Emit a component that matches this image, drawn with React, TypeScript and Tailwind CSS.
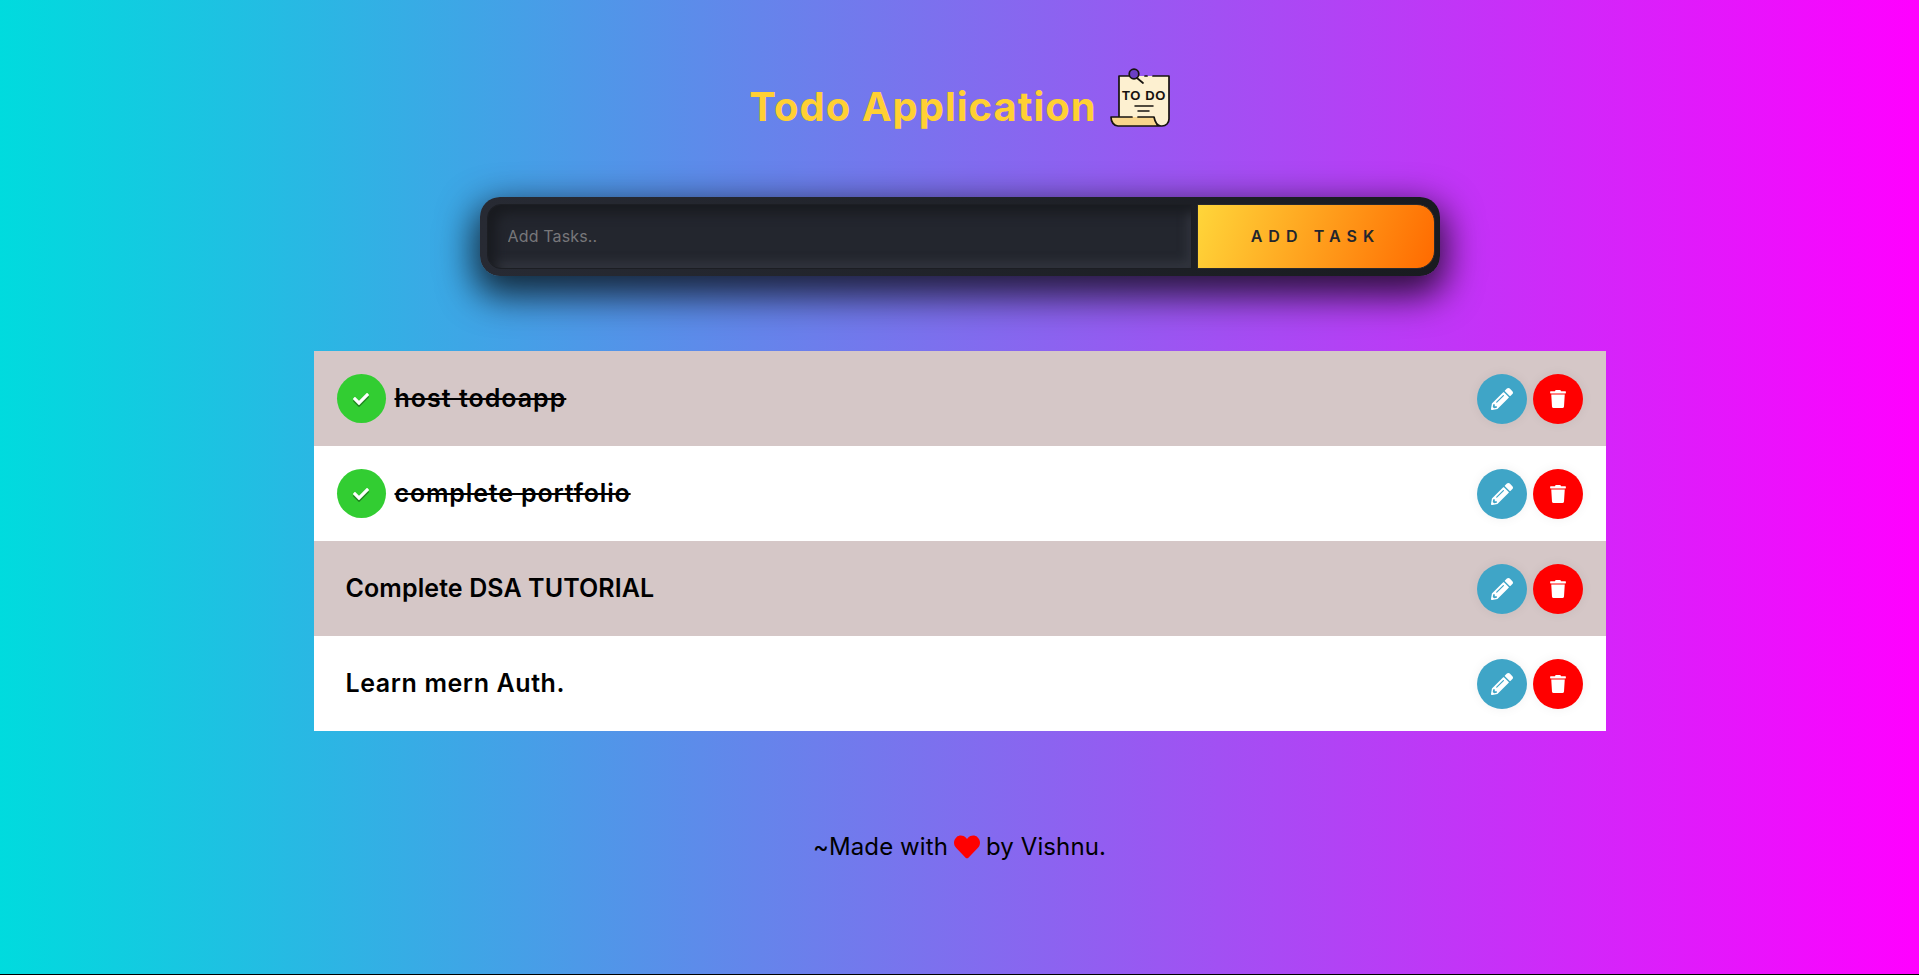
import React from 'react';
import { FaCheck, FaHeart, FaPencilAlt, FaTrash } from 'react-icons/fa';

interface Task {
  id: number;
  title: string;
  done: boolean;
  tracking: string;
}

// Inter is narrower than the original face in lowercase and wider in caps, so spacing is set per title
const tasks: Task[] = [
  { id: 1, title: 'host todoapp', done: true, tracking: 'tracking-[1px]' },
  { id: 2, title: 'complete portfolio', done: true, tracking: 'tracking-[0.85px]' },
  { id: 3, title: 'Complete DSA TUTORIAL', done: false, tracking: 'tracking-[0.1px]' },
  { id: 4, title: 'Learn mern Auth.', done: false, tracking: 'tracking-[0.6px]' },
];

const TodoNote = () => (
  <svg className="w-[60px] h-[60px] shrink-0" viewBox="0 0 60 60" fill="none">
    <path d="M9 8h50v43c0 4-3 7-7 7H16c-4 0-7-3-7-8z" fill="#fdf0d0" />
    <path d="M1 49h43c1 5 3 9 7 9H8c-4 0-7-4-7-9z" fill="#f9d58c" />
    <path d="M9 48V8h10M35 8h2M43 8h16v43c0 4-3 7-7 7H8c-4 0-7-4-7-9h21M28 49h16c1 5 3 9 7 9" stroke="#17130f" strokeWidth="1.7" strokeLinecap="round" strokeLinejoin="round" />
    <circle cx="24" cy="6" r="4.8" fill="#6b3fc4" stroke="#17130f" strokeWidth="1.7" />
    <path d="M27 10l6 5" stroke="#17130f" strokeWidth="1.7" strokeLinecap="round" />
    <text x="34" y="32" textAnchor="middle" fontFamily="'Liberation Sans', sans-serif" fontSize="13" fontWeight="700" letterSpacing="0.6" fill="#17130f">TO DO</text>
    <path d="M25 38h18M28 43h11" stroke="#17130f" strokeWidth="1.5" strokeLinecap="round" />
  </svg>
);

const TaskRow: React.FC<{ task: Task; shaded: boolean }> = ({ task, shaded }) => (
  <li className={`flex items-center justify-between h-[95px] px-[23px] ${shaded ? 'bg-[#d5c7c7]' : 'bg-white'}`}>
    <div className="flex items-center">
      {task.done ? (
        <span className="flex items-center justify-center w-[49px] h-[49px] rounded-full bg-[#32cd32] text-white mr-[9px]">
          <FaCheck className="w-4 h-4 drop-shadow-[0_2px_0_rgba(0,0,0,0.35)]" />
        </span>
      ) : (
        <span className="w-[8px]" />
      )}
      <span className={`text-[25px] font-semibold text-black ${task.tracking} ${task.done ? 'line-through' : 'pl-px'}`}>{task.title}</span>
    </div>
    <div className="flex items-center gap-[6px]">
      <button className="flex items-center justify-center w-[50px] h-[50px] rounded-full bg-[#3fa5c7] text-white shadow-[0_0_12px_rgba(0,0,0,0.06)]">
        <FaPencilAlt className="w-[22px] h-[22px]" />
      </button>
      <button className="flex items-center justify-center w-[50px] h-[50px] rounded-full bg-[#ff0000] text-white shadow-[0_0_12px_rgba(0,0,0,0.06)]">
        <FaTrash className="w-4 h-[18px]" />
      </button>
    </div>
  </li>
);

export default function App() {
  return (
    <div className="bg-black h-[975px] overflow-hidden font-['Inter','Liberation_Sans',sans-serif]">
      <div className="h-[974px] flex flex-col items-center bg-[linear-gradient(90deg,#00dbde_0%,#ff00ff_100%)]">
        <header className="flex items-center gap-[13px] h-[60px] mt-[68px]">
          <h1 className="pt-[18px] text-[40px] font-bold tracking-[1px] text-[#ffd033]">Todo Application</h1>
          <TodoNote />
        </header>

        <form className="flex items-stretch w-[960px] h-[79px] mt-[69px] py-[7px] pl-[7px] pr-[5px] rounded-[20px] bg-[linear-gradient(90deg,#272a33,#191b20)] shadow-[0_14px_36px_6px_rgba(0,0,0,0.75)]">
          <input
            placeholder="Add Tasks.."
            className="w-[705px] px-5 pb-[2px] text-base tracking-[0.15px] text-white placeholder:text-[#77777a] outline-none bg-[#23262e] border border-[#1c1e23] rounded-l-[14px] shadow-[inset_8px_8px_12px_#191b20,inset_-4px_-6px_10px_#33363f]"
          />
          <button type="button" className="flex-1 ml-[5px] pb-[1px] text-base font-semibold tracking-[0.38em] text-[#23262e] border border-[#2a2a2e] rounded-r-[18px] bg-[linear-gradient(110deg,#ffd63a,#ff6a00)]">
            ADD TASK
          </button>
        </form>

        <ul className="w-[1292px] mt-[75px]">
          {tasks.map((task, index) => (
            <TaskRow key={task.id} task={task} shaded={index % 2 === 0} />
          ))}
        </ul>

        <footer className="flex items-center mt-[98px] text-[24px] tracking-[0.1px] text-black">
          ~Made with <FaHeart className="w-[26px] h-[26px] mx-[6px] text-[#ff0000]" /> by Vishnu.
        </footer>
      </div>
    </div>
  );
}
